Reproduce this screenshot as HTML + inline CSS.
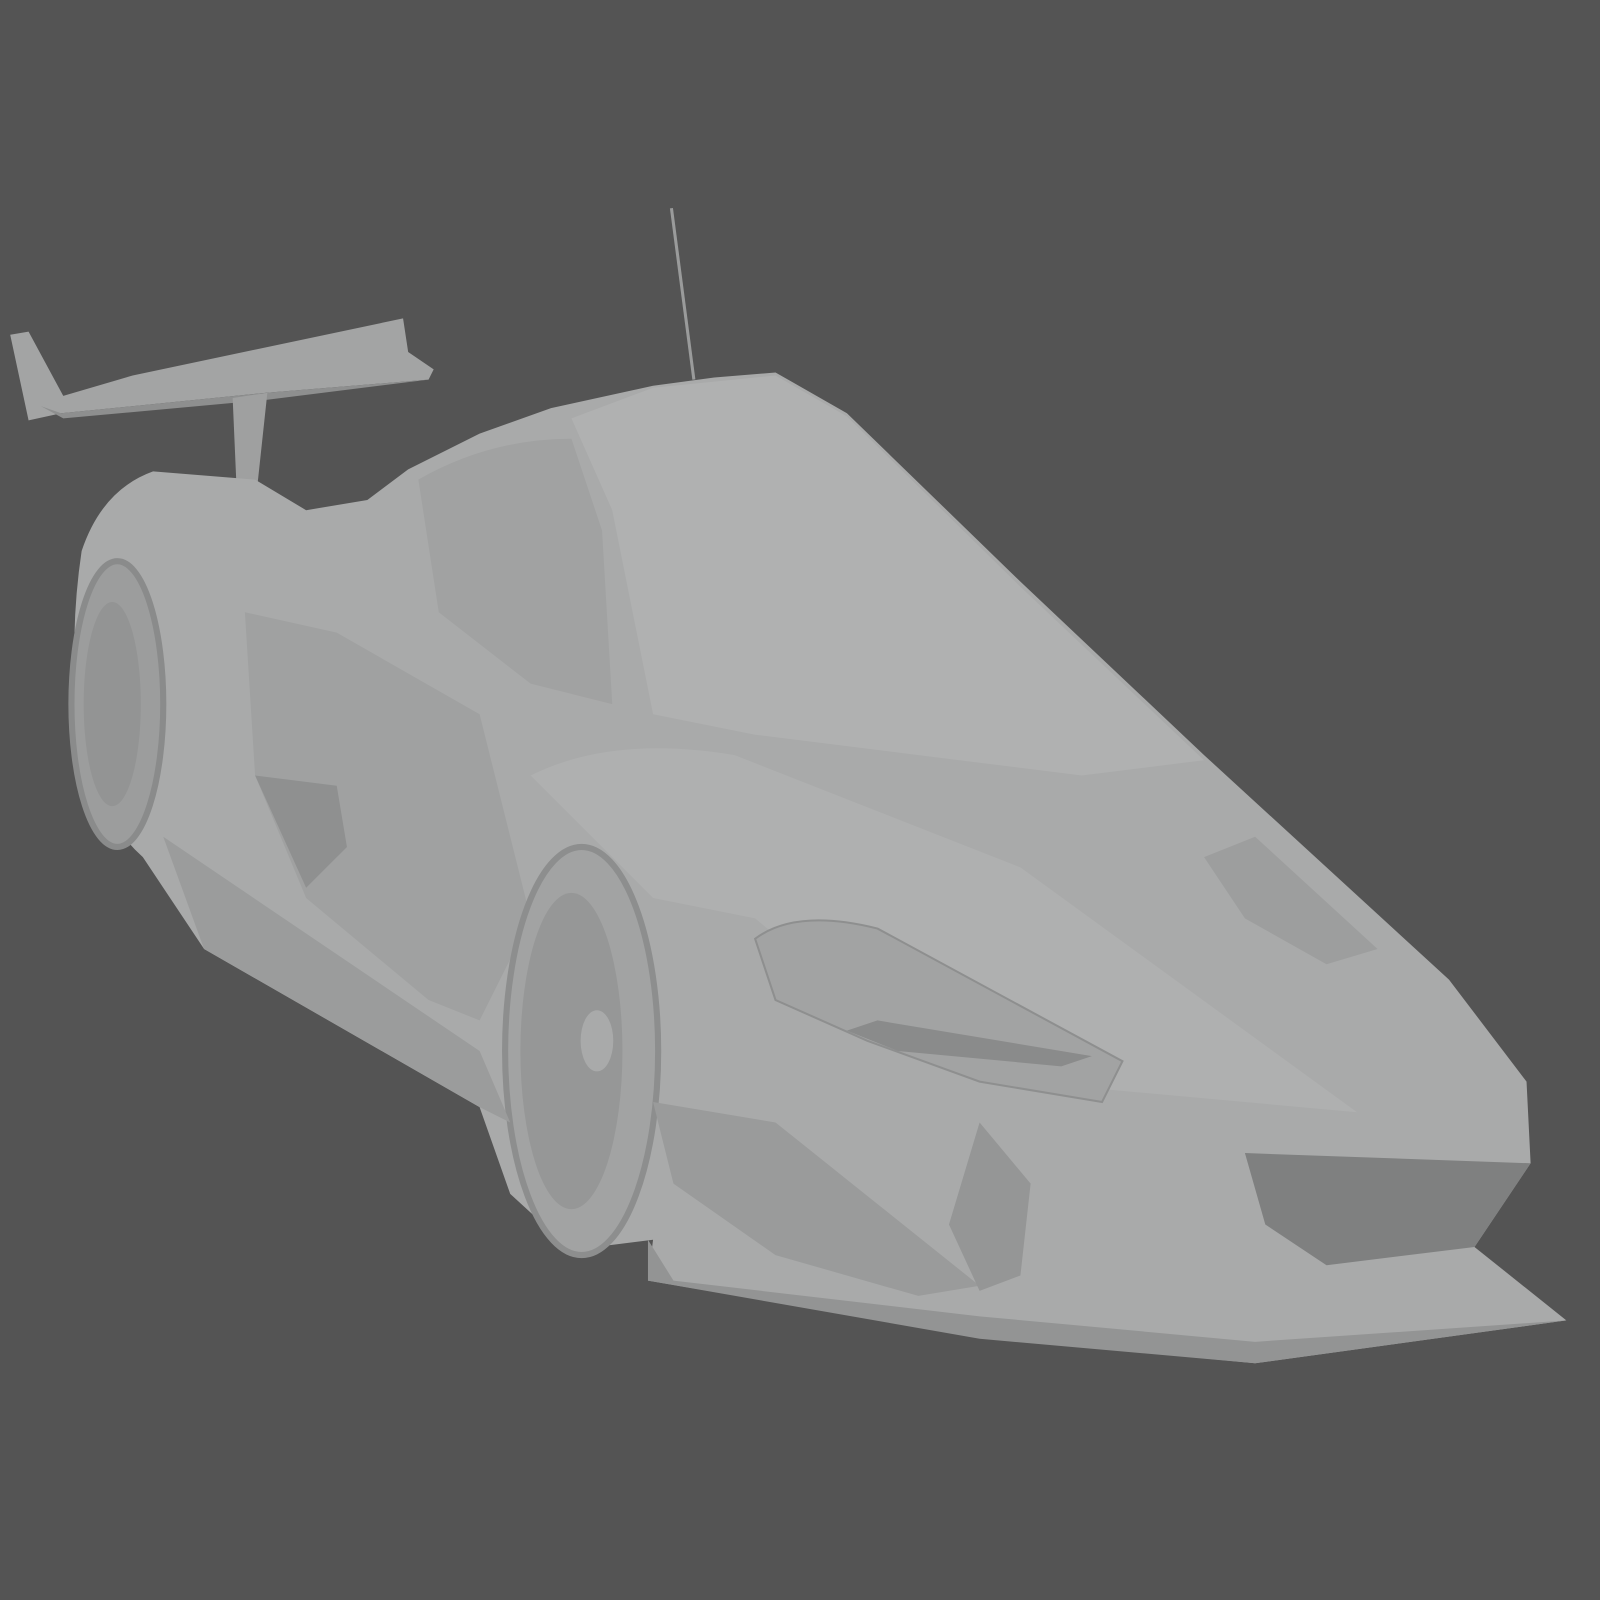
<!DOCTYPE html>
<html><head><style>html,body{margin:0;padding:0;background:#545454;}svg{display:block}</style></head>
<body>
<svg width="1600" height="1600" viewBox="0 0 1568 1568" xmlns="http://www.w3.org/2000/svg">
<rect width="1568" height="1568" fill="#545454"/>
<!-- antenna -->
<line x1="658" y1="204" x2="680" y2="372" stroke="#9a9b9b" stroke-width="3"/>
<!-- rear wing -->
<polygon points="10,328 28,325 62,388 130,368 395,312 400,345 425,362 420,372 260,385 60,405 28,412" fill="#a3a4a4"/>
<polygon points="40,398 60,405 260,385 420,372 260,392 62,410" fill="#8e8f8f"/>
<polygon points="228,390 262,385 252,478 232,482" fill="#9fa0a0"/>
<!-- main body -->
<path d="M150,462 Q100,480 80,540 Q68,620 76,700 Q85,790 140,840 L200,930 L470,1085 L500,1170 L560,1225 L640,1215 L635,1255 L960,1310 L1230,1336 L1535,1294 L1445,1222 L1500,1140 L1496,1060 L1420,960 L1180,740 L1000,570 L830,405 L760,365 L700,370 L640,378 L540,400 L470,425 L400,460 L360,490 L300,500 L250,470 Z" fill="#a9aaaa"/>
<!-- roof/windshield lighter -->
<path d="M560,410 L640,380 L760,368 L830,408 L1000,575 L1180,745 L1060,760 L900,740 L740,720 L640,700 L600,500 Z" fill="#b0b1b1"/>
<!-- side window darker -->
<path d="M410,470 Q480,430 560,430 L590,520 L600,690 L520,670 L430,600 Z" fill="#a1a2a2"/>
<!-- rear wheel -->
<ellipse cx="115" cy="690" rx="45" ry="140" fill="#9c9d9d" stroke="#8a8b8b" stroke-width="6"/>
<ellipse cx="110" cy="690" rx="28" ry="100" fill="#939494"/>
<!-- side intake -->
<path d="M240,600 L330,620 L470,700 L520,900 L470,1000 L420,980 L300,880 L250,760 Z" fill="#a0a1a1"/>
<path d="M250,760 L330,770 L340,830 L300,870 Z" fill="#8f9090"/>
<!-- front wheel -->
<ellipse cx="570" cy="1030" rx="75" ry="200" fill="#a2a3a3" stroke="#8d8e8e" stroke-width="6"/>
<ellipse cx="560" cy="1030" rx="50" ry="155" fill="#969797"/>
<ellipse cx="585" cy="1020" rx="16" ry="30" fill="#a9aaaa"/>
<!-- front fender highlight -->
<path d="M520,760 Q600,720 720,740 L1000,850 L1330,1090 L1000,1060 L860,1000 L740,900 L640,880 Z" fill="#afb0b0"/>
<!-- headlight scoop -->
<path d="M740,920 Q780,890 860,910 L1100,1040 L1080,1080 L960,1060 L850,1020 L760,980 Z" fill="#a2a3a3" stroke="#8e8f8f" stroke-width="2"/>
<path d="M830,1010 L860,1000 L1070,1035 L1040,1045 L880,1030 Z" fill="#8a8b8b"/>
<!-- hood vent -->
<path d="M1180,840 L1230,820 L1350,930 L1300,945 L1220,900 Z" fill="#9d9e9e"/>
<!-- front bumper dark -->
<path d="M1220,1130 L1500,1140 L1445,1222 L1300,1240 L1240,1200 Z" fill="#7f8080"/>
<!-- front intakes -->
<path d="M640,1080 L760,1100 L860,1180 L960,1260 L900,1270 L760,1230 L660,1160 Z" fill="#9a9b9b"/>
<path d="M960,1100 L1010,1160 L1000,1250 L960,1265 L930,1200 Z" fill="#959696"/>
<!-- splitter -->
<path d="M635,1215 L660,1255 L960,1290 L1230,1315 L1535,1294 L1230,1336 L960,1312 L635,1255 Z" fill="#939494"/>
<!-- side skirt -->
<path d="M160,820 L470,1030 L500,1100 L470,1085 L200,930 Z" fill="#9b9c9c"/>
</svg>
</body></html>
